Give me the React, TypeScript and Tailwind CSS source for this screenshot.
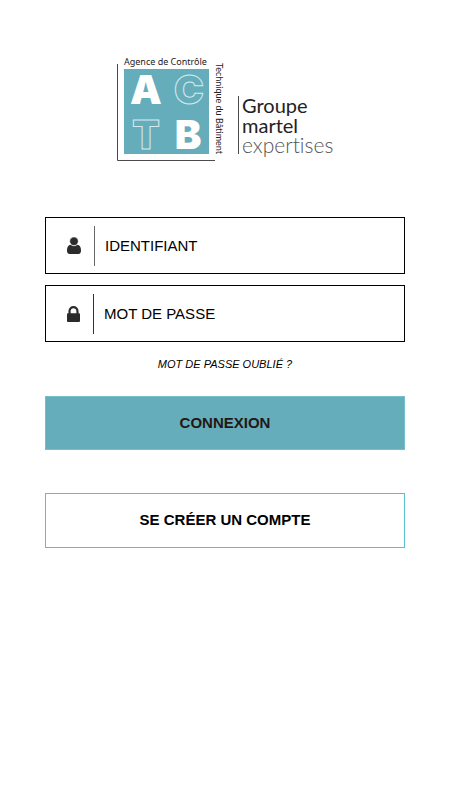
const UserIcon = () => (
  <svg viewBox="0 0 1280 1536" className="w-[14px] h-[17px]" fill="#2b2b2b" aria-hidden="true">
    <path d="M1280 1271q0 109-62.5 187t-150.5 78H213q-88 0-150.5-78T0 1271q0-85 8.5-160.5t31.500-152 58.5-131 94-89T327 704q131 128 313 128t313-128q76 0 134.5 34.5t94 89 58.5 131 31.5 152 8.5 160.5z" />
    <path d="M1024 384q0 159-112.5 271.5T640 768 368.5 655.5 256 384t112.5-271.5T640 0t271.5 112.5T1024 384z" stroke="#fff" strokeWidth="40" />
  </svg>
);

const LockIcon = () => (
  <svg viewBox="0 128 1152 1408" className="w-[13px] h-[16px]" fill="#2b2b2b" aria-hidden="true">
    <path d="M320 768h512V576q0-106-75-181t-181-75-181 75-75 181v192zm832 96v576q0 40-28 68t-68 28H96q-40 0-68-28t-28-68V864q0-40 28-68t68-28h32V576q0-184 132-316t316-132 316 132 132 316v192h32q40 0 68 28t28 68z" />
  </svg>
);

const Logo = () => (
  <svg viewBox="0 0 220 108" className="w-[220px] h-[108px]" role="img" aria-label="ACTB, Groupe martel expertises">
    <path d="M2.5 8v96.5H100" fill="none" stroke="#4b4b4b" />
    <rect x="9" y="13" width="85" height="85" fill="#65adbb" />

    <g fontSize="9" fill="#222">
      <text x="9" y="9" fontFamily="'Noto Sans', sans-serif">Agence de Contrôle</text>
      <text transform="translate(101 7) rotate(90)" fontFamily="Lato, sans-serif">Technique du Bâtiment</text>
    </g>

    <g fontFamily="Inter, 'Open Sans', sans-serif" fontWeight="900" fontSize="40" textAnchor="middle">
      <text x="31" y="48" fill="#fff">A</text>
      <text x="74" y="48" fill="none" stroke="#d5eaee">C</text>
      <text x="31" y="93" fill="none" stroke="#d5eaee">T</text>
      <text x="73" y="93" fill="#fff">B</text>
    </g>

    <path d="M123.5 40v58" stroke="#4b4b4b" />
    <g fontFamily="Lato, 'Open Sans', sans-serif" fontSize="20" fill="#222">
      <text x="127" y="57">Groupe</text>
      <text x="127" y="77">martel</text>
      <text x="127" y="97" fontSize="21" fontWeight="300" fill="#555" className="[font-variant-ligatures:none]">expertises</text>
    </g>
  </svg>
);

const App: React.FC = () => {
  return (
    <main className="min-h-screen bg-white px-[45px] pt-14 text-black font-['Liberation_Sans',Arial,sans-serif]">
      <div className="flex justify-center">
        <Logo />
      </div>

      <form className="pt-[53px]" onSubmit={(e) => e.preventDefault()}>
        <div className="space-y-[11px]">
          <div className="flex items-center h-[57px] pl-[21px] pr-3 border border-black">
            <label htmlFor="login" aria-label="IDENTIFIANT" className="flex items-center h-10 w-7 shrink-0 border-r border-[#666]">
              <UserIcon />
            </label>
            <input
              id="login"
              type="text"
              placeholder="IDENTIFIANT"
              className="flex-1 min-w-0 h-10 pl-[10px] text-[15px] outline-none placeholder:text-black"
            />
          </div>
          <div className="flex items-center h-[57px] pl-[21px] pr-3 border border-black">
            <label htmlFor="password" aria-label="MOT DE PASSE" className="flex items-center h-10 w-[27px] shrink-0 border-r border-[#333]">
              <LockIcon />
            </label>
            <input
              id="password"
              type="password"
              placeholder="MOT DE PASSE"
              className="flex-1 min-w-0 h-10 pl-[10px] text-[15px] outline-none placeholder:text-black"
            />
          </div>
        </div>

        <div className="pt-3.5 text-center text-[11px] leading-4 italic">
          <a href="#">MOT DE PASSE OUBLIÉ ?</a>
        </div>

        <button
          type="submit"
          className="mt-6 w-full h-[54px] bg-[#65adbb] border border-[#73c0cb] text-[15px] font-bold text-[#231815]"
        >
          CONNEXION
        </button>
        <button
          type="button"
          className="mt-[43px] w-full h-[55px] bg-white border border-[#5bbfcd] text-[15px] font-bold"
        >
          SE CRÉER UN COMPTE
        </button>
      </form>
    </main>
  );
};

export default App;
